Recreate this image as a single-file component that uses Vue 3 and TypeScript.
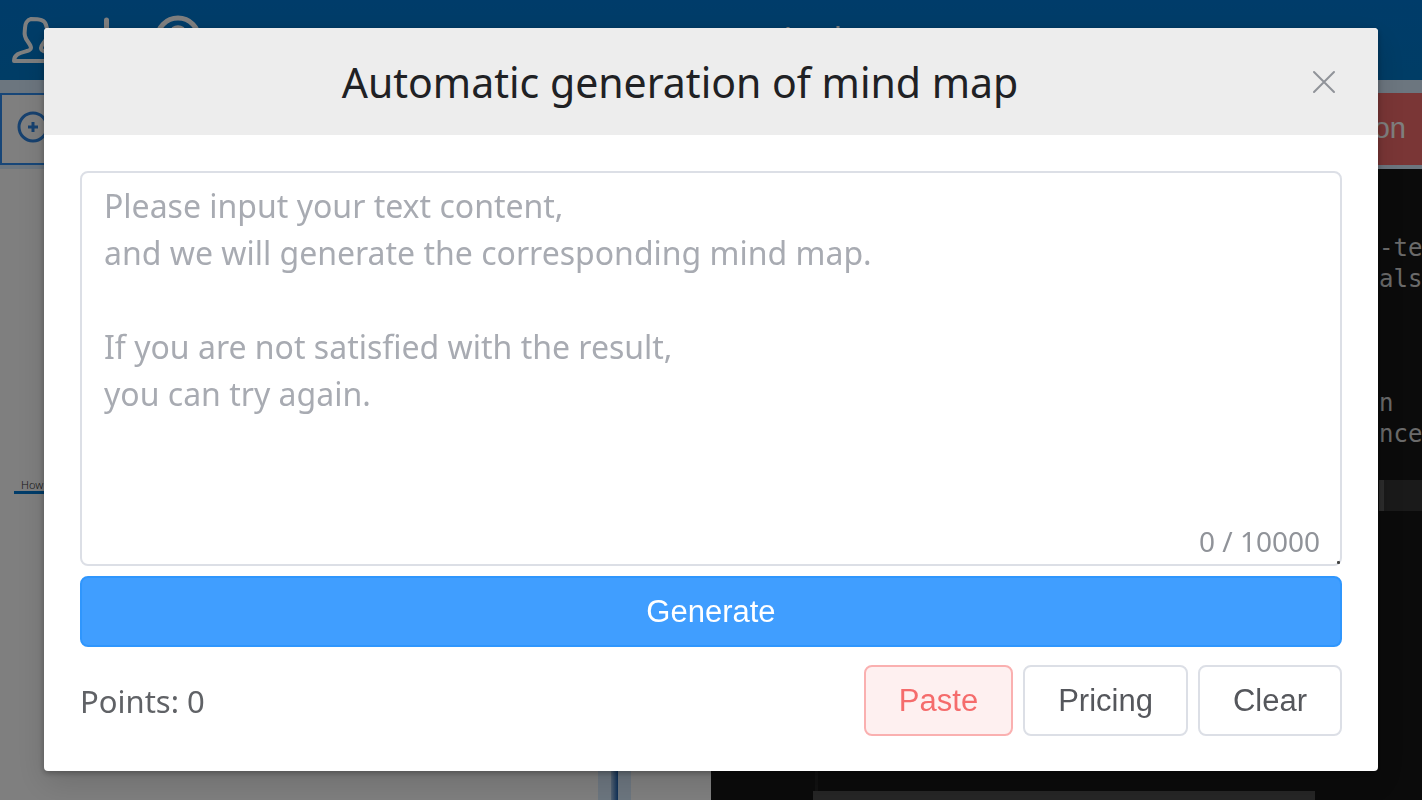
<script setup lang="ts">
import { computed, ref } from 'vue'

const limit = 10000
const content = ref('')
const points = ref(0)
const open = ref(true)
const count = computed(() => `${content.value.length} / ${limit}`)
const placeholder = [
  'Please input your text content,',
  'and we will generate the corresponding mind map.',
  '',
  'If you are not satisfied with the result,',
  'you can try again.',
].join('\n')
const codeLines: string[] = ['', '', '-te', 'als', '', '', '', 'n', 'nce', '']

async function paste(): Promise<void> {
  content.value = (await navigator.clipboard.readText()).slice(0, limit)
}
function clear(): void {
  content.value = ''
}
</script>

<template>
  <div class="page">
    <header class="topbar">
      <svg class="topicons" viewBox="0 0 900 80" fill="none" stroke="currentColor" stroke-width="5" stroke-linecap="round" stroke-linejoin="round">
        <path d="M31 19C27 20 25 24 25 28C25 31 24 33 25 36C26 41 31 44 31 48C31 53 14 50 14 61H62C62 50 41 55 41 48C41 44 46 42 47 36C48 32 47 28 46 25C45 20 40 19 31 19Z" stroke-width="4" />
        <path d="M106.500 20V56" />
        <circle cx="178" cy="39" r="21" />
        <path d="M172 33C172 26 184 26 184 33C184 39 178 39 178 45" />
        <path d="M788 27V44M838 26V44" stroke-width="3" stroke-linecap="butt" />
      </svg>
    </header>
    <div class="toolbar">
      <button class="zoom" type="button" aria-label="Zoom in">
        <svg viewBox="0 0 32 32" fill="none" stroke="currentColor" stroke-width="3">
          <circle cx="16" cy="16" r="14" />
          <path d="M16 11V21M11 16H21" />
        </svg>
      </button>
      <button class="action" type="button">on</button>
    </div>
    <div class="panes">
      <section class="canvas">
        <span class="node">How</span>
        <div class="splitter"><i></i></div>
      </section>
      <section class="editor">
        <div class="code">
          <div v-for="(line, i) in codeLines" :key="i" class="line">{{ line }}</div>
          <div class="line current"></div>
        </div>
        <div class="guide"></div>
        <div class="thumb"></div>
      </section>
    </div>

    <div v-if="open" class="overlay">
      <div class="dialog" role="dialog" aria-modal="true" aria-labelledby="dialog-title">
        <div class="head">
          <h1 id="dialog-title">Automatic generation of mind map</h1>
          <button class="close" type="button" aria-label="Close" @click="open = false">
            <svg viewBox="0 0 24 24" fill="none" stroke="currentColor" stroke-width="2" stroke-linecap="round">
              <path d="M2 2L22 22M22 2L2 22" />
            </svg>
          </button>
        </div>
        <div class="body">
          <div class="field">
            <textarea v-model="content" :maxlength="limit" :placeholder="placeholder" aria-label="Text content"></textarea>
            <span class="count">{{ count }}</span>
            <i class="grip"></i>
          </div>
          <button class="btn primary" type="button">Generate</button>
          <div class="foot">
            <span class="points">Points: {{ points }}</span>
            <div class="actions">
              <button class="btn danger" type="button" @click="paste">Paste</button>
              <button class="btn" type="button">Pricing</button>
              <button class="btn" type="button" @click="clear">Clear</button>
            </div>
          </div>
        </div>
      </div>
    </div>
  </div>
</template>

<style>
body {
  margin: 0;
}
</style>

<style scoped>
* {
  box-sizing: border-box;
}
.page {
  height: 100vh;
  display: flex;
  flex-direction: column;
  overflow: hidden;
  background: #fff;
  font-family: "Noto Sans", "Open Sans", sans-serif;
}
button {
  font-family: "Liberation Sans", Arial, sans-serif;
  cursor: pointer;
}
.topbar {
  flex: none;
  height: 80px;
  background: linear-gradient(#0079d4, #007acc);
  color: #fff;
}
.topicons {
  display: block;
  width: 900px;
  height: 80px;
}
.toolbar {
  flex: none;
  display: flex;
  justify-content: space-between;
  padding: 13px 0 4px;
  background: #d9ecff;
}
.zoom {
  width: 120px;
  height: 72px;
  padding: 0 15px;
  border: 2px solid #2e8df0;
  background: #fff;
  color: #2e84e0;
  text-align: left;
}
.zoom svg {
  display: block;
  width: 32px;
  height: 32px;
  margin-bottom: 4px;
}
.action {
  height: 72px;
  padding: 0 16px 2px 40px;
  border: 0;
  background: #f56c6c;
  color: #fff;
  font-size: 29px;
}
.panes {
  flex: 1;
  min-height: 0;
  display: grid;
  grid-template-columns: 1fr 1fr;
}
.canvas {
  position: relative;
  display: flex;
  justify-content: flex-end;
  padding-right: 80px;
}
.node {
  position: absolute;
  left: 14px;
  top: 309px;
  padding: 0 7px;
  border-bottom: 3px solid #0079d4;
  font-size: 11px;
  font-weight: 300;
  line-height: 13px;
  color: #333;
}
.splitter {
  display: flex;
  justify-content: center;
  width: 33px;
  background: #d9ecff;
}
.splitter i {
  width: 7px;
  background: linear-gradient(90deg, #a9c6e6, #1c5fae);
}
.editor {
  display: grid;
  grid-template-rows: 1fr 9px;
  background: #161616;
  overflow: hidden;
}
.code {
  grid-area: 1 / 1;
  justify-self: end;
  width: 43px;
  padding-top: 1px;
  color: #d4d4d4;
  font-family: "DejaVu Sans Mono", monospace;
  font-size: 24px;
  line-height: 32px;
}
.line {
  height: 31px;
  white-space: pre;
}
.current {
  border-left: 5px solid #5a5a5a;
  background: #343434;
}
.guide {
  grid-area: 1 / 1;
  width: 3px;
  margin-left: 104px;
  background: #222;
}
.thumb {
  grid-area: 2 / 1;
  margin: 0 107px 0 102px;
  background: #4c4c4c;
}
.overlay {
  position: fixed;
  inset: 0;
  padding: 28px 44px;
  background: rgba(0, 0, 0, 0.5);
}
.dialog {
  border-radius: 4px;
  background: #fff;
  box-shadow: 0 2px 6px rgba(0, 0, 0, 0.3), 0 12px 32px rgba(0, 0, 0, 0.14);
  overflow: hidden;
}
.head {
  display: grid;
  grid-template-columns: 64px 1fr 64px;
  align-items: center;
  height: 107px;
  padding: 0 22px;
  background: #ededed;
}
h1 {
  grid-column: 2;
  margin: 0;
  padding-right: 62px;
  color: #202124;
  font-size: 41px;
  font-weight: 400;
  line-height: 60px;
  text-align: center;
  white-space: nowrap;
}
.close {
  display: flex;
  justify-content: center;
  padding: 20px;
  border: 0;
  background: none;
  color: #909399;
}
.close svg {
  width: 24px;
  height: 24px;
}
.body {
  padding: 36px 36px 35px;
}
.field {
  position: relative;
  display: flex;
  margin-bottom: 10px;
}
textarea {
  flex: 1;
  height: 395px;
  padding: 9px 22px;
  border: 2px solid #dcdfe6;
  border-radius: 8px;
  outline: 0;
  background: #fff;
  color: #606266;
  font-family: inherit;
  font-size: 32px;
  line-height: 47px;
  resize: none;
}
textarea::placeholder {
  color: #a8abb2;
  opacity: 1;
}
.count {
  position: absolute;
  right: 22px;
  bottom: 5px;
  color: #909399;
  font-size: 28px;
  line-height: 40px;
}
.grip {
  position: absolute;
  right: 2px;
  bottom: 2px;
  width: 3px;
  height: 3px;
  border-radius: 1px;
  background: #444;
}
.btn {
  height: 71px;
  padding: 0 33px;
  border: 2px solid #dcdfe6;
  border-radius: 8px;
  background: #fff;
  color: #55575c;
  font-size: 31px;
}
.primary {
  display: block;
  width: 100%;
  border-color: #2f96fd;
  background: #409eff;
  color: #fff;
}
.danger {
  border-color: #fab0b0;
  background: #fef0f0;
  color: #f56c6c;
}
.foot {
  display: flex;
  align-items: center;
  justify-content: space-between;
  margin-top: 18px;
}
.points {
  color: #606266;
  font-size: 31px;
}
.actions {
  display: flex;
  gap: 10px;
}
</style>
